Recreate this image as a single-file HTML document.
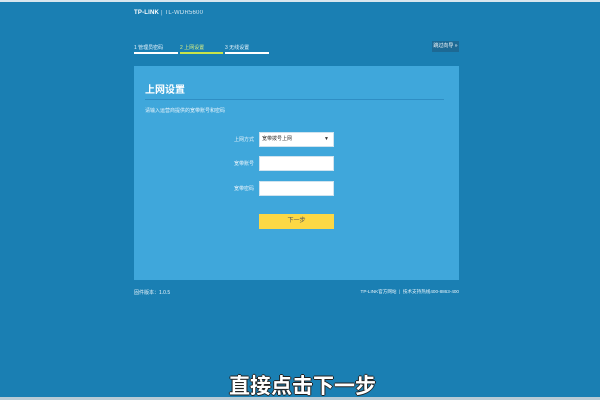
<!DOCTYPE html>
<html><head><meta charset="utf-8"><style>
body{margin:0;width:600px;height:400px;overflow:hidden;background:#1a7fb3;font-family:"Liberation Sans","Noto Sans CJK SC",sans-serif;position:relative;color:#fff}
.a{position:absolute}
.lbl{font-size:5px;color:#e8f4fb;white-space:nowrap}
.in{background:#fff;border:1px solid #cfe3ef;box-sizing:border-box;width:75px;height:15px;left:259px}
</style></head><body>
<div class="a" style="left:0;top:0;width:600px;height:2px;background:#d8e6ee"></div>
<div class="a" style="left:134px;top:10px;font-size:6px;font-weight:bold;letter-spacing:0.2px">TP-LINK <span style="font-weight:normal;opacity:.8">| TL-WDR5600</span></div>
<div class="a lbl" style="left:134px;top:44px">1 管理员密码</div>
<div class="a lbl" style="left:180px;top:44px;color:#d8ef80">2 上网设置</div>
<div class="a lbl" style="left:225px;top:44px">3 无线设置</div>
<div class="a" style="left:134px;top:52px;width:44px;height:2px;background:#fff"></div>
<div class="a" style="left:180px;top:52px;width:43px;height:2px;background:#c8e34a"></div>
<div class="a" style="left:225px;top:52px;width:44px;height:2px;background:#fff"></div>
<div class="a" style="left:432px;top:41px;width:27px;height:11px;background:#1d6994;font-size:5px;line-height:11px;text-align:center">跳过向导 »</div>
<div class="a" style="left:134px;top:66px;width:325px;height:214px;background:#3fa7db"></div>
<div class="a" style="left:145px;top:81px;font-size:10px;font-weight:bold">上网设置</div>
<div class="a" style="left:145px;top:99px;width:299px;height:1px;background:#2f8ec4"></div>
<div class="a lbl" style="left:145px;top:107px">请输入运营商提供的宽带账号和密码</div>
<div class="a lbl" style="left:234px;top:136px">上网方式</div>
<div class="a lbl" style="left:234px;top:160px">宽带账号</div>
<div class="a lbl" style="left:234px;top:185px">宽带密码</div>
<div class="a in" style="top:132px;color:#333;font-size:5px;line-height:13px;padding-left:2px">宽带拨号上网<span style="position:absolute;right:4px;font-size:5px">▼</span></div>
<div class="a in" style="top:156px"></div>
<div class="a in" style="top:181px"></div>
<div class="a" style="left:259px;top:214px;width:75px;height:15px;background:#fcd845;color:#555;font-size:6px;line-height:15px;text-align:center">下一步</div>
<div class="a lbl" style="left:134px;top:289px">固件版本：1.0.5</div>
<div class="a lbl" style="right:141px;top:289px;font-size:4.6px">TP-LINK官方网站 &nbsp;|&nbsp; 技术支持热线400-8863-400</div>
<div class="a" style="left:229px;top:372px;font-size:21px;font-weight:bold;font-family:'Noto Sans CJK SC',sans-serif;color:#fff;text-shadow:-1px 0 #222,1px 0 #222,0 -1px #222,0 1px #222;line-height:26px">直接点击下一步</div>
<div class="a" style="left:0;top:397px;width:600px;height:3px;background:#b8cbd6"></div>
</body></html>
